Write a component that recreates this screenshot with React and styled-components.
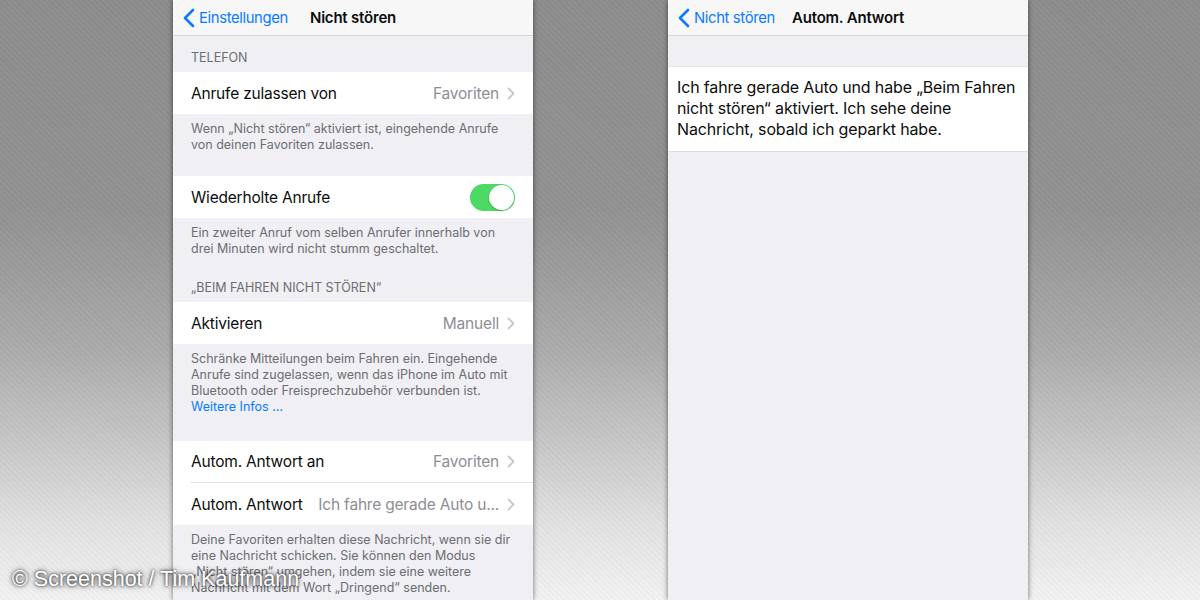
import React from 'react';
import styled, { createGlobalStyle } from 'styled-components';

const Global = createGlobalStyle`
  html, body {
    margin: 0;
    padding: 0;
  }
  body {
    font-family: Inter, 'Noto Sans', sans-serif;
    -webkit-font-smoothing: antialiased;
  }
`;

const Stage = styled.div`
  position: relative;
  width: 1200px;
  height: 600px;
  overflow: hidden;
  display: flex;
  gap: 135px;
  padding-left: 173px;
  box-sizing: border-box;
  background:
    repeating-linear-gradient(45deg, rgba(255, 255, 255, 0.025) 0 2px, rgba(0, 0, 0, 0.025) 2px 4px),
    linear-gradient(to bottom, #8d8d8d 0%, #929292 35%, #ababab 58%, #cacaca 75%, #e3e3e3 88%, #f3f3f3 100%);
`;

const Phone = styled.div`
  width: 360px;
  height: 600px;
  flex: none;
  background: #efeff4;
  box-shadow: 0 0 5px rgba(0, 0, 0, 0.55);
  display: flex;
  flex-direction: column;
  overflow: hidden;
`;

const NavBar = styled.div`
  position: relative;
  height: 35px;
  flex: none;
  display: flex;
  align-items: center;
  justify-content: center;
  background: #f7f7f8;
  border-bottom: 1px solid #d6d6da;
`;

const Back = styled.a`
  position: absolute;
  left: 10px;
  top: 0;
  height: 35px;
  display: flex;
  align-items: center;
  gap: 4px;
  color: #0a7bff;
  font-size: 14.8px;
  letter-spacing: -0.35px;
`;

const Title = styled.span`
  font-weight: 600;
  font-size: 15px;
  letter-spacing: -0.2px;
  color: #0d0d0d;
`;

const SectionHeader = styled.div`
  height: ${p => p.$height || 36}px;
  flex: none;
  display: flex;
  align-items: flex-end;
  box-sizing: border-box;
  padding: 0 18px 6px;
  font-size: 12.5px;
  line-height: 16px;
  color: #6d6d72;
`;

const Group = styled.div`
  background: #fff;
  flex: none;
`;

const Row = styled.div`
  height: 42px;
  box-sizing: border-box;
  display: flex;
  align-items: center;
  margin-left: 18px;
  padding-right: 18px;
  gap: 8px;
  border-bottom: ${p => (p.$divider ? '1px solid #e0e0e4' : 'none')};
`;

const Label = styled.span`
  font-size: 15.5px;
  letter-spacing: -0.2px;
  color: #0d0d0d;
  white-space: nowrap;
`;

const Value = styled.span`
  flex: 1;
  min-width: 0;
  text-align: right;
  font-size: 15.5px;
  letter-spacing: -0.2px;
  color: #8e8e93;
  white-space: nowrap;
`;

const Footer = styled.div`
  flex: none;
  padding: 7px 18px ${p => p.$bottom || 0}px;
  font-size: 12.5px;
  line-height: 16px;
  color: #6d6d72;
`;

const More = styled.a`
  color: #0a7bff;
`;

const Toggle = styled.span`
  margin-left: auto;
  width: 45px;
  height: 27px;
  border-radius: 14px;
  background: #4cd964;
  position: relative;
  flex: none;
  &::after {
    content: '';
    position: absolute;
    right: 1px;
    top: 1px;
    width: 25px;
    height: 25px;
    border-radius: 50%;
    background: #fff;
    box-shadow: 0 1px 2px rgba(0, 0, 0, 0.25);
  }
`;

const Spacer = styled.div`
  height: ${p => p.$h}px;
  flex: none;
`;

const Message = styled.div`
  background: #fff;
  padding: 10px 9px 11px;
  font-size: 16px;
  line-height: 21px;
  letter-spacing: -0.15px;
  color: #0d0d0d;
  border-top: 1px solid #e6e6ea;
  border-bottom: 1px solid #dcdce0;
`;

// credit line sits over the left phone
const Credit = styled.div`
  position: absolute;
  left: 12px;
  bottom: 8px;
  font-family: 'Liberation Sans', Arial, sans-serif;
  font-size: 21.5px;
  color: #fff;
  text-shadow: 0 0 3px rgba(0, 0, 0, 0.9), 0 0 6px rgba(0, 0, 0, 0.6);
  white-space: nowrap;
`;

const BackChevron = () => (
  <svg width="12" height="20" viewBox="0 0 12 20">
    <path d="M10 2 L2 10 L10 18" fill="none" stroke="#0a7bff" strokeWidth="2.6" strokeLinecap="round" strokeLinejoin="round" />
  </svg>
);

const Chevron = () => (
  <svg width="8" height="13" viewBox="0 0 8 13" style={{ flex: 'none' }}>
    <path d="M1.5 1.5 L6.5 6.5 L1.5 11.5" fill="none" stroke="#c7c7cc" strokeWidth="1.8" strokeLinecap="round" strokeLinejoin="round" />
  </svg>
);

const Nav = ({ back, title }) => (
  <NavBar>
    <Back>
      <BackChevron />
      {back}
    </Back>
    <Title>{title}</Title>
  </NavBar>
);

const Cell = ({ label, value, divider }) => (
  <Row $divider={divider}>
    <Label>{label}</Label>
    <Value>{value}</Value>
    <Chevron />
  </Row>
);

export default function App() {
  return (
    <>
      <Global />
      <Stage>
        <Phone>
          <Nav back="Einstellungen" title="Nicht stören" />
          <SectionHeader>TELEFON</SectionHeader>
          <Group>
            <Cell label="Anrufe zulassen von" value="Favoriten" />
          </Group>
          <Footer $bottom={23}>
            Wenn „Nicht stören“ aktiviert ist, eingehende Anrufe von deinen Favoriten zulassen.
          </Footer>
          <Group>
            <Row>
              <Label>Wiederholte Anrufe</Label>
              <Toggle />
            </Row>
          </Group>
          <Footer>
            Ein zweiter Anruf vom selben Anrufer innerhalb von drei Minuten wird nicht stumm geschaltet.
          </Footer>
          <SectionHeader $height={45}>„BEIM FAHREN NICHT STÖREN“</SectionHeader>
          <Group>
            <Cell label="Aktivieren" value="Manuell" />
          </Group>
          <Footer $bottom={26}>
            Schränke Mitteilungen beim Fahren ein. Eingehende Anrufe sind zugelassen, wenn das iPhone im Auto mit
            Bluetooth oder Freisprechzubehör verbunden ist.
            <br />
            <More>Weitere Infos …</More>
          </Footer>
          <Group>
            <Cell label="Autom. Antwort an" value="Favoriten" divider />
            <Cell label="Autom. Antwort" value="Ich fahre gerade Auto u..." />
          </Group>
          <Footer>
            Deine Favoriten erhalten diese Nachricht, wenn sie dir eine Nachricht schicken. Sie können den Modus
            „Nicht stören“ umgehen, indem sie eine weitere Nachricht mit dem Wort „Dringend“ senden.
          </Footer>
        </Phone>

        <Phone>
          <Nav back="Nicht stören" title="Autom. Antwort" />
          <Spacer $h={30} />
          <Message>
            Ich fahre gerade Auto und habe „Beim Fahren nicht stören“ aktiviert. Ich sehe deine Nachricht, sobald ich
            geparkt habe.
          </Message>
        </Phone>

        <Credit>© Screenshot / Tim Kaufmann</Credit>
      </Stage>
    </>
  );
}
